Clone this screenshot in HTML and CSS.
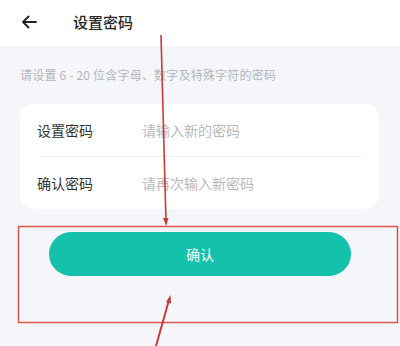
FILE: index.html
```html
<!DOCTYPE html>
<html lang="zh-CN">
<head>
  <meta charset="UTF-8" />
  <meta name="viewport" content="width=device-width, initial-scale=1.0"/>
  <title>设置密码</title>
  <link rel="stylesheet" href="styles.css">
</head>
<body>
  <div class="page">
    <div class="topbar">
      <svg class="back" width="16" height="14" viewBox="0 0 16 14">
        <path d="M15 7H2M7.5 1.5L2 7l5.5 5.5" fill="none" stroke="#222" stroke-width="1.8" stroke-linecap="round" stroke-linejoin="round"/>
      </svg>
      <span class="title">设置密码</span>
    </div>

    <p class="hint">请设置 6 - 20 位含字母、数字及特殊字符的密码</p>

    <div class="card">
      <div class="row">
        <span class="label">设置密码</span>
        <input type="password" placeholder="请输入新的密码" />
      </div>
      <div class="divider"></div>
      <div class="row">
        <span class="label">确认密码</span>
        <input type="password" placeholder="请再次输入新密码" />
      </div>
    </div>

    <button class="confirm">确认</button>

    <!-- red markup drawn over the screenshot -->
    <svg class="marks" width="400" height="346" viewBox="0 0 400 346">
      <rect x="18.5" y="226.5" width="379" height="96" fill="none" stroke="#d9534f" stroke-width="1.5"/>
      <path d="M161 35L166 222" stroke="#cc3a35" stroke-width="1.6" fill="none"/>
      <path d="M163 218L166.2 226L168.5 218Z" fill="#cc3a35"/>
      <path d="M156 346L169 300" stroke="#cc3a35" stroke-width="2" fill="none"/>
      <path d="M166 302L170.5 295L171 303.5Z" fill="#cc3a35"/>
    </svg>
  </div>
</body>
</html>
```

FILE: styles.css
```css
body {
  margin: 0;
  background: #f5f6fa;
  font-family: "Noto Sans CJK SC", "Noto Sans", sans-serif;
}
.page {
  position: relative;
  width: 400px;
  height: 346px;
  overflow: hidden;
}
.topbar {
  height: 46px;
  background: white;
  display: flex;
  align-items: center;
  padding-left: 21px;
}
.back {
  display: block;
  margin-top: -2px;
}
.title {
  margin-left: 36px;
  margin-top: -3px;
  font-size: 15px;
  font-weight: 500;
  color: #262626;
}
.hint {
  margin: 0;
  padding: 20px 20px 0;
  height: 38px;
  font-size: 12px;
  line-height: 17px;
  letter-spacing: 0.2px;
  color: #b3b5bb;
}
.card {
  margin: 0 21px 0 20px;
  background: white;
  border-radius: 14px;
  padding: 0;
}
.row {
  display: flex;
  align-items: center;
  height: 52px;
  padding-left: 17px;
}
.label {
  width: 105px;
  font-size: 14px;
  color: #333;
}
.row input {
  flex: 1;
  border: none;
  outline: none;
  padding: 0;
  font-family: inherit;
  font-size: 14px;
  background: transparent;
}
.row input::placeholder {
  color: #b8b8bd;
}
.divider {
  height: 1px;
  background: #eeeff2;
  margin: 0 17px 0 20px;
}
.confirm {
  display: block;
  margin: 23px 49px 0;
  width: 302px;
  height: 44px;
  border: none;
  border-radius: 22px;
  background: #14c1aa;
  color: white;
  font-family: inherit;
  font-size: 14px;
  cursor: pointer;
}
.marks {
  position: absolute;
  left: 0;
  top: 0;
  pointer-events: none;
}
```
